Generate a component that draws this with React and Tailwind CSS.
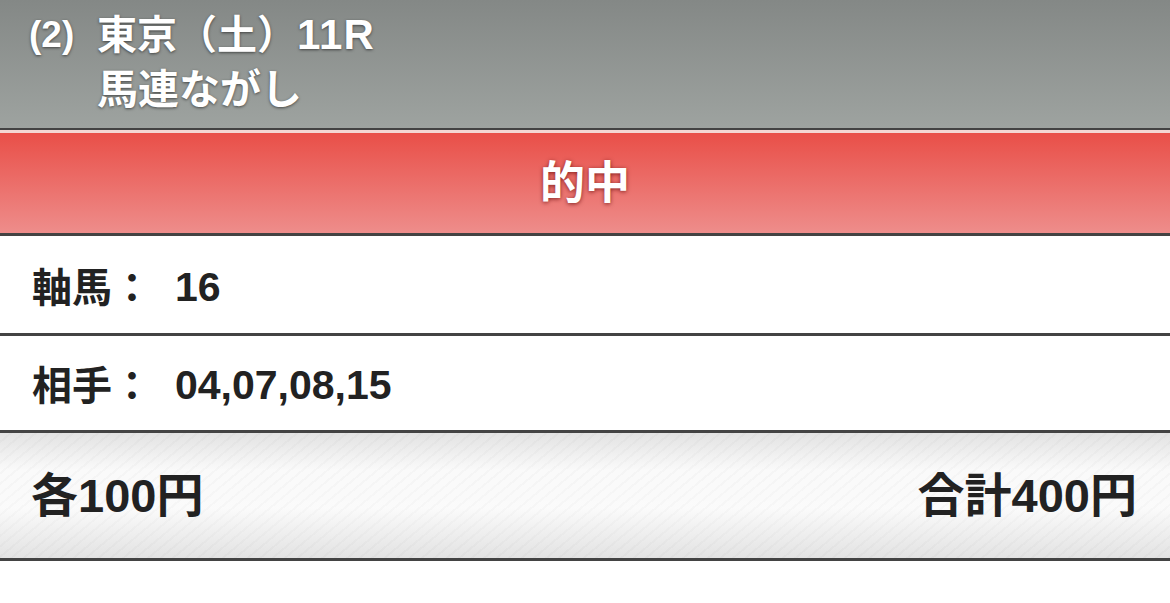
export default function App() {
  const font = { fontFamily: '"Liberation Sans", "Noto Sans CJK JP", sans-serif' };
  return (
    <div className="w-[1170px] h-[603px] bg-white overflow-hidden" style={font}>
      <div className="h-[128px] bg-[linear-gradient(to_bottom,#848886,#9ea3a0)] flex pt-[7px] pl-[29px] text-white font-bold [text-shadow:0_1px_3px_rgba(0,0,0,0.55)]">
        <div className="w-[68px] text-[37px] leading-[55px]">(2)</div>
        <div className="flex flex-col">
          <div className="text-[40px] leading-[55px] whitespace-nowrap">
            東京（土）<span className="text-[42px] tracking-[1px]">11R</span>
          </div>
          <div className="text-[41px] leading-[55px] whitespace-nowrap">馬連ながし</div>
        </div>
      </div>
      <div className="h-[2px] bg-[#434343]" />
      <div className="h-[3px] bg-[#f4d6d2]" />
      <div className="h-[100px] bg-[linear-gradient(to_bottom,#e94f48,#ee8d8b)] flex items-center justify-center pt-[2px] text-white font-bold text-[45px] [text-shadow:0_1px_4px_rgba(90,0,0,0.7)]">
        的中
      </div>
      <div className="h-[3px] bg-[#434343]" />
      <div className="h-[97px] flex items-center pl-[32px] pt-[6px] text-[#222] font-bold">
        <span className="text-[40px] w-[143px]">軸馬：</span>
        <span className="text-[41px]">16</span>
      </div>
      <div className="h-[3px] bg-[#434343]" />
      <div className="h-[94px] flex items-center pl-[32px] pt-[6px] text-[#222] font-bold">
        <span className="text-[40px] w-[143px]">相手：</span>
        <span className="text-[41px]">04,07,08,15</span>
      </div>
      <div className="h-[3px] bg-[#434343]" />
      <div className="h-[125px] relative bg-[#f1f1f1] bg-[repeating-linear-gradient(140deg,#f4f4f4_0px,#f4f4f4_6px,#e9e9e9_6px,#e9e9e9_8px)]">
        <div className="absolute inset-0 bg-[linear-gradient(to_bottom,rgba(215,215,215,0.6)_0%,rgba(255,255,255,0.55)_30%,rgba(255,255,255,0.6)_60%,rgba(215,215,215,0.6)_100%)]" />
        <div className="relative h-full flex items-center justify-between pl-[31px] pr-[33px] pt-[2px] text-[#222] font-bold text-[47px]">
          <span>各100円</span>
          <span>合計400円</span>
        </div>
      </div>
      <div className="h-[3px] bg-[#434343]" />
    </div>
  );
}
